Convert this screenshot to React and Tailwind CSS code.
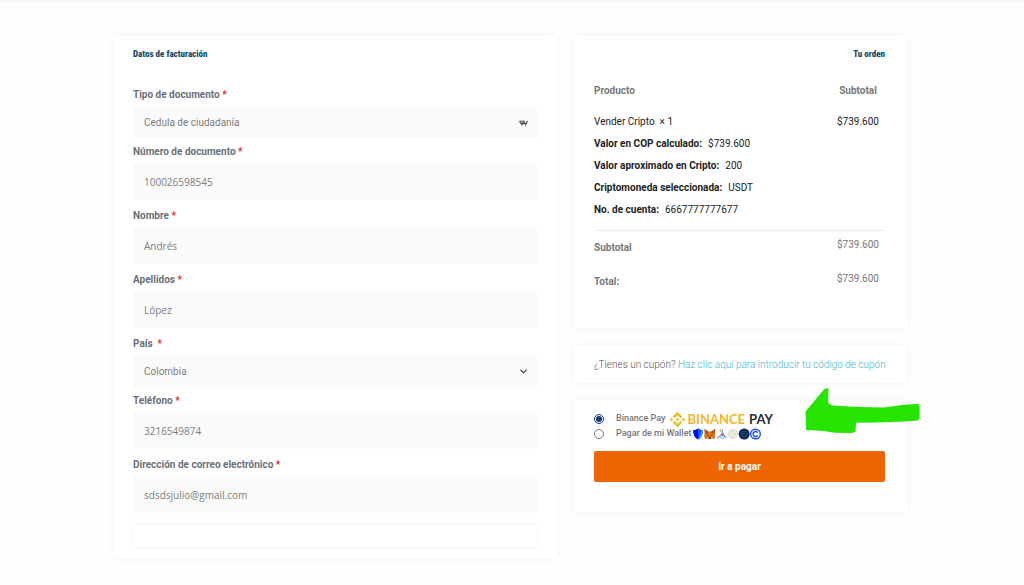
/**
 * App.jsx - Página de pago (facturación + orden)
 */

import React, { useState } from 'react';
import { ChevronDown } from 'lucide-react';

const campos = [
  { id: 'tipo_documento', label: 'Tipo de documento', tipo: 'select', valor: 'Cedula de ciudadanía', doble: true },
  { id: 'numero_documento', label: 'Número de documento', tipo: 'text', valor: '100026598545' },
  { id: 'nombre', label: 'Nombre', tipo: 'text', valor: 'Andrés' },
  { id: 'apellidos', label: 'Apellidos', tipo: 'text', valor: 'López' },
  { id: 'pais', label: 'País\u00a0', tipo: 'select', valor: 'Colombia' },
  { id: 'telefono', label: 'Teléfono', tipo: 'tel', valor: '3216549874' },
  { id: 'email', label: 'Dirección de correo electrónico', tipo: 'email', valor: 'sdsdsjulio@gmail.com' },
];

const detalles = [
  { nombre: 'Valor en COP calculado:', valor: '$739.600' },
  { nombre: 'Valor aproximado en Cripto:', valor: '200' },
  { nombre: 'Criptomoneda seleccionada:', valor: 'USDT' },
  { nombre: 'No. de cuenta:', valor: '6667777777677' },
];

const Card = ({ className = '', children }) => (
  <div className={`rounded-sm bg-white shadow-[0_0_6px_rgba(0,0,0,0.06)] ${className}`}>
    {children}
  </div>
);

const Titulo = ({ className = '', children }) => (
  <h2 className={`font-['Roboto_Condensed','Open_Sans_Condensed','Roboto',sans-serif] text-[9px] leading-5 font-extrabold text-[#0b4a66] ${className}`}>
    {children}
  </h2>
);

const Campo = ({ campo }) => {
  const esSelect = campo.tipo === 'select';

  return (
    <div className={esSelect ? 'mb-[6px]' : 'mb-2'}>
      <label htmlFor={campo.id} className="mb-1 block leading-4 font-bold text-[#6b6f7b]">
        {campo.label} <span className="text-[#e02b2b]">*</span>
      </label>
      {esSelect ? (
        <div className="relative">
          <select
            id={campo.id}
            defaultValue={campo.valor}
            className="block h-[31px] w-full appearance-none bg-[#fafafa] px-[11px] pb-px text-[#7d7d7d]"
          >
            <option>{campo.valor}</option>
          </select>
          {campo.doble ? (
            <svg viewBox="0 0 11 11" className="pointer-events-none absolute top-[10px] right-2 size-[11px]">
              <path d="M1.500 4l2.500 3.500L6 5l1.500 2.500L9.500 4" fill="none" stroke="#555" strokeWidth="1.400" />
              <path d="M2 3.500h5L5 6z" fill="#777" />
            </svg>
          ) : (
            <ChevronDown className="pointer-events-none absolute top-[10px] right-2 size-[11px] text-[#444]" strokeWidth={3} />
          )}
        </div>
      ) : (
        <input
          id={campo.id}
          type={campo.tipo}
          defaultValue={campo.valor}
          className="block h-9 w-full bg-[#fafafa] px-[11px] font-['Open_Sans',sans-serif] text-[#7d7d7d]"
        />
      )}
    </div>
  );
};

const BinanceLogo = () => (
  <span className="flex items-center font-['Lato',sans-serif] text-[13px] leading-[15px] font-bold">
    <svg viewBox="0 0 24 24" className="mr-[3px] size-[15px]" fill="#f0b92d">
      <path d="M7.2 10.1 12 5.3l4.8 4.8 2.8-2.8L12 -.3 4.4 7.3zM-.3 12l2.8-2.8L5.3 12l-2.8 2.8zM7.2 13.9 12 18.7l4.8-4.8 2.8 2.8-7.6 7.6-7.6-7.6zM18.7 12l2.8-2.8 2.8 2.8-2.8 2.8zM12 9.1l2.9 2.9-2.9 2.9L9.1 12z" />
    </svg>
    <span className="text-[#f0b92d]">BINANCE</span>
    <span className="ml-1 text-[#2b2b33]">PAY</span>
  </span>
);

const WalletIcons = () => (
  <svg viewBox="0 0 70 12" className="h-3 w-[70px]">
    {/* Trust Wallet */}
    <path d="M1 2.2Q4 2 6 .4 8 2 11 2.2 11 9 6 11.6 1 9 1 2.2z" fill="#0500ff" />
    <path d="M6 .4Q8 2 11 2.2 11 9 6 11.6z" fill="#18b4f0" />
    <path d="M6 .4Q8 2 9.5 2.1 8.5 8 6 11.6z" fill="#0a50ff" />
    {/* MetaMask */}
    <path d="M12.4 1l4 2.4h2.8l4-2.4-.5 4.5.6 2.6-1 2.9-3-.8-1.1 1h-1l-1.2-1-3 .8-.9-2.9.6-2.6z" fill="#e2761b" />
    <path d="M12.4 1l4 2.4-.5 3-2.9-.9zM23.2 1l-4 2.4.5 3 2.9-.9z" fill="#b8541c" />
    <path d="M15 7l2 .5-.6 1zM20.6 7l-2 .5.6 1zM16.8 9.6h2l.3 1.2h-2.6z" fill="#2d3444" />
    {/* Token Pocket */}
    <g fill="none" strokeWidth="1.2">
      <path d="M28.2 1v3" stroke="#f3ba4c" />
      <path d="M30.2 1.500v4.700l3.800 3.300" stroke="#4a86f4" />
      <path d="M29.800 6.600l-4.600 3.800" stroke="#4a8de9" />
      <path d="M31.200 5v3.400M28.800 6.400l2.800 1.200" stroke="#e65a50" />
      <path d="M28 9.300l4.600 1.200" stroke="#9cc4f7" />
    </g>
    {/* SafePal */}
    <circle cx="41" cy="6" r="4.8" fill="#f4f1ed" stroke="#c9c4bd" strokeWidth=".6" />
    <circle cx="41" cy="6" r="2.8" fill="none" stroke="#b8b3ab" strokeWidth=".9" strokeDasharray="1.3 1" />
    <circle cx="41" cy="6" r=".8" fill="#e8c98a" />
    {/* Crypto.com */}
    <circle cx="52.2" cy="6" r="5.5" fill="#0b2350" />
    <path d="M52.2 2.8L55 4.4v3.2l-2.8 1.6-2.8-1.6V4.4z" fill="none" stroke="#3c5d97" strokeWidth=".7" />
    <circle cx="52.2" cy="6" r="1.1" fill="#28477e" />
    {/* Coinbase */}
    <circle cx="63.5" cy="6" r="5.5" fill="#1652f0" />
    <circle cx="63.5" cy="6" r="4.1" fill="#fff" />
    <path d="M65.700 4.600a2.500 2.500 0 1 0 0 2.800" fill="none" stroke="#1652f0" strokeWidth="1.500" />
  </svg>
);

const Flecha = () => (
  <svg viewBox="0 0 116 46" className="pointer-events-none absolute -top-3 -right-[13px] h-[46px] w-[116px]">
    <path
      d="M20 1.5Q22 0 24 .2L24.500 1.500 24.200 15 28 17.600L55 19 80 19.500Q90 18 98 17L114 15.800 115.600 17V31L114 32.500 101 33.500 72 34.600 52 34.700 51.500 43.500Q50 45 46 45L31 44.800Q26 44 20 43L2 42 1.500 23.500z"
      fill="#26e600"
    />
  </svg>
);

const Pago = () => {
  const [metodo, setMetodo] = useState('binance');

  return (
    <Card className="relative pt-3 pr-[22px] pb-[31px] pl-5">
      <Flecha />
      <div className="mb-[9px] text-[9px] font-medium text-[#777]">
        <div className="flex h-[15px] items-center">
          <input
            id="pago_binance"
            type="radio"
            name="metodo"
            className="mr-3 size-[10px] accent-[#0d3b7a]"
            checked={metodo === 'binance'}
            onChange={() => setMetodo('binance')}
          />
          <label htmlFor="pago_binance" className="flex items-center gap-1">
            Binance Pay <BinanceLogo />
          </label>
        </div>
        <div className="flex h-[15px] items-center">
          <input
            id="pago_wallet"
            type="radio"
            name="metodo"
            className="mr-3 size-[10px] accent-[#0d3b7a]"
            checked={metodo === 'wallet'}
            onChange={() => setMetodo('wallet')}
          />
          <label htmlFor="pago_wallet" className="flex items-center gap-px">
            Pagar de mi Wallet <WalletIcons />
          </label>
        </div>
      </div>
      <button type="button" className="block h-[31px] w-full rounded-xs bg-[#ee6400] font-bold text-white">
        Ir a pagar
      </button>
    </Card>
  );
};

const Orden = () => (
  <Card className="pt-2 pr-[22px] pb-[30px] pl-5">
    <Titulo className="text-right">Tu orden</Titulo>
    <table className="mt-4 w-full text-[#777]">
      <thead>
        <tr className="h-[21px] leading-[22px]">
          <th className="text-left font-bold">Producto</th>
          <th className="w-[54px] text-center font-bold">Subtotal</th>
        </tr>
      </thead>
      <tbody className="border-b border-[#ececec] text-[#222]">
        <tr className="align-top leading-[22px]">
          <td className="pt-[9px] pb-[9px]">
            Vender Cripto&nbsp; × 1
            <dl>
              {detalles.map((d) => (
                <div key={d.nombre} className="flex gap-[6px]">
                  <dt className="font-bold">{d.nombre}</dt>
                  <dd>{d.valor}</dd>
                </div>
              ))}
            </dl>
          </td>
          <td className="pt-[9px] text-center">$739.600</td>
        </tr>
      </tbody>
      <tfoot>
        <tr className="h-[34px] align-top leading-4">
          <th className="pt-[9px] text-left font-bold">Subtotal</th>
          <td className="pt-[6px] text-center">$739.600</td>
        </tr>
        <tr className="h-[34px] align-top leading-4">
          <th className="pt-[9px] text-left font-bold">Total:</th>
          <td className="pt-[6px] text-center">$739.600</td>
        </tr>
      </tfoot>
    </table>
  </Card>
);

const App = () => (
  <div className="min-h-screen bg-[#fefefe] font-['Roboto',sans-serif] text-[10px]">
    <div className="h-[2px] bg-[#f8f8f8]"></div>
    <main className="grid grid-cols-[4fr_3fr] items-start gap-[17px] pt-[34px] pr-[117px] pb-[27px] pl-[113px]">
      <Card className="px-5 pt-2 pb-[11px]">
        <Titulo className="mb-[23px]">Datos de facturación</Titulo>
        <form>
          {campos.map((campo) => (
            <Campo key={campo.id} campo={campo} />
          ))}
        </form>
        <Card className="mt-3 h-[22px]" />
      </Card>

      <div className="flex flex-col gap-[17px]">
        <Orden />
        <Card className="px-5 py-[10px] leading-[17px] font-light text-[#555]">
          ¿Tienes un cupón?{' '}
          <a href="#cupon" className="text-[#3fb3cf]">
            Haz clic aquí para introducir tu código de cupón
          </a>
        </Card>
        <Pago />
      </div>
    </main>
  </div>
);

export default App;
